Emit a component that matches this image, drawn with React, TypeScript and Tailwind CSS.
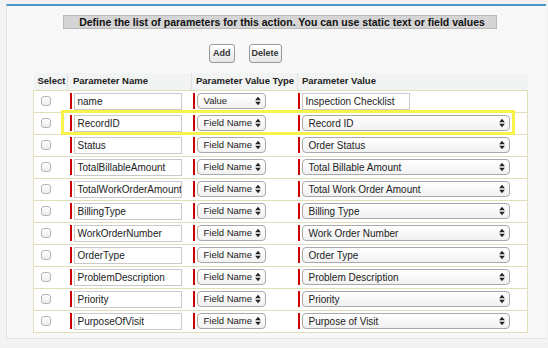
import React from 'react'

type Row = { name: string; type: string; value: string; valueIsText?: boolean }

const rows: Row[] = [
  { name: 'name', type: 'Value', value: 'Inspection Checklist', valueIsText: true },
  { name: 'RecordID', type: 'Field Name', value: 'Record ID' },
  { name: 'Status', type: 'Field Name', value: 'Order Status' },
  { name: 'TotalBillableAmount', type: 'Field Name', value: 'Total Billable Amount' },
  { name: 'TotalWorkOrderAmount', type: 'Field Name', value: 'Total Work Order Amount' },
  { name: 'BillingType', type: 'Field Name', value: 'Billing Type' },
  { name: 'WorkOrderNumber', type: 'Field Name', value: 'Work Order Number' },
  { name: 'OrderType', type: 'Field Name', value: 'Order Type' },
  { name: 'ProblemDescription', type: 'Field Name', value: 'Problem Description' },
  { name: 'Priority', type: 'Field Name', value: 'Priority' },
  { name: 'PurposeOfVisit', type: 'Field Name', value: 'Purpose of Visit' },
]

function Arrows() {
  return (
    <svg width="6" height="10" viewBox="0 0 6 10" className="shrink-0">
      <path d="M3 0.8 L5.8 4.2 L0.2 4.2 Z" fill="#222" />
      <path d="M3 9.2 L5.8 5.8 L0.2 5.8 Z" fill="#222" />
    </svg>
  )
}

function Required() {
  return <div className="w-[2px] h-[16px] bg-[#c00] shrink-0 mr-[2px]" />
}

function TextBox({ value, width }: { value: string; width: string }) {
  return (
    <div className={`${width} h-[17px] border border-[#c9c9c9] bg-white flex items-center pl-[3px] text-[10px] text-[#222] whitespace-nowrap overflow-hidden`}>
      {value}
    </div>
  )
}

function Select({ value, width, size }: { value: string; width: string; size: string }) {
  return (
    <div className={`${width} ${size} h-[16px] rounded-[4px] border border-[#a9a9a9] bg-gradient-to-b from-white to-[#f1f1f1] flex items-center justify-between pl-[6px] pr-[4px] text-[#222] whitespace-nowrap`}>
      <span>{value}</span>
      <Arrows />
    </div>
  )
}

export default function App() {
  return (
    <div className="w-[548px] h-[348px] bg-[#f3f3f3] overflow-hidden pt-[4px] pl-[6px]" style={{ fontFamily: '"Liberation Sans", Arial, sans-serif' }}>
      <div className="w-[540px] h-[335px] bg-[#f8f8f8] border-t-2 border-t-[#4b98c6] border-l border-b border-[#e2e2e2]">
        {/* section title */}
        <div className="mt-[9px] ml-[56px] w-[434px] h-[14px] bg-[#d5d5d5] border border-[#b9b9b9] flex items-center justify-center pl-[4px] text-[10.5px] font-bold text-[#111] leading-none whitespace-nowrap">
          Define the list of parameters for this action. You can use static text or field values
        </div>

        {/* buttons */}
        <div className="mt-[15px] flex gap-[14px] pl-[202px]">
          <button className="h-[19px] px-[3px] border border-[#9a9a9a] rounded-[3px] bg-gradient-to-b from-white to-[#e6e6e6] text-[9px] font-bold text-[#333] leading-none">Add</button>
          <button className="h-[19px] px-[2px] border border-[#9a9a9a] rounded-[3px] bg-gradient-to-b from-white to-[#e6e6e6] text-[9px] font-bold text-[#333] leading-none">Delete</button>
        </div>

        {/* parameter table */}
        <div className="relative mt-[10px] ml-[26px] w-[494px]">
          <table className="w-[494px] border-collapse table-fixed">
            <colgroup>
              <col className="w-[34px]" />
              <col className="w-[124px]" />
              <col className="w-[106px]" />
              <col className="w-[230px]" />
            </colgroup>
            <thead>
              <tr className="h-[17px] bg-[#f2f3f3] text-left text-[9.5px] text-[#222] whitespace-nowrap">
                <th className="pl-[4px] font-bold">Select</th>
                <th className="pl-[5px] font-bold border-l border-[#e0e0e0]">Parameter Name</th>
                <th className="pl-[4px] font-bold border-l border-[#e0e0e0]">Parameter Value Type</th>
                <th className="pl-[4px] font-bold border-l border-[#e0e0e0]">Parameter Value</th>
              </tr>
            </thead>
            <tbody className="bg-white">
              {rows.map((r) => (
                <tr key={r.name} className="h-[22px] border-t border-[#e3deb8]">
                  <td className="border-l border-[#e3deb8] pl-[7px] p-0">
                    <div className="w-[10px] h-[10px] rounded-[3px] border border-[#b5b5b5] bg-gradient-to-b from-white to-[#ececec]" />
                  </td>
                  <td className="pl-[2px] p-0">
                    <div className="flex items-center">
                      <Required />
                      <TextBox value={r.name} width="w-[108px]" />
                    </div>
                  </td>
                  <td className="pl-[1px] p-0">
                    <div className="flex items-center">
                      <Required />
                      <Select value={r.type} width="w-[69px]" size="text-[9.5px]" />
                    </div>
                  </td>
                  <td className="border-r border-[#e3deb8] p-0">
                    <div className="flex items-center">
                      <Required />
                      {r.valueIsText ? (
                        <TextBox value={r.value} width="w-[108px]" />
                      ) : (
                        <Select value={r.value} width="w-[208px]" size="text-[10px]" />
                      )}
                    </div>
                  </td>
                </tr>
              ))}
              <tr className="h-0 border-t border-[#e3deb8]"><td colSpan={4} className="p-0" /></tr>
            </tbody>
          </table>
          {/* highlight box */}
          <div className="absolute left-[28px] top-[37px] w-[454px] h-[25px] border-[3px] border-[#f7f34c] pointer-events-none" />
        </div>
      </div>
    </div>
  )
}
